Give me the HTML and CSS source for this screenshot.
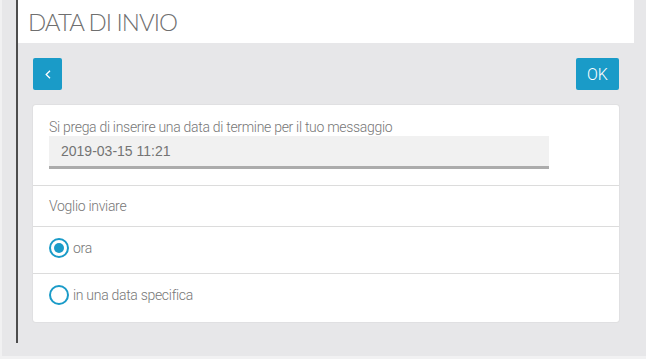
FILE: index.html
```html
<!DOCTYPE html>
<html lang="it">

<head>
    <meta charset="UTF-8">
    <meta name="viewport" content="width=device-width, initial-scale=1.0">
    <title>Data di invio</title>
    <link rel="stylesheet" href="styles.css">
</head>

<body>
    <div class="page">
        <div class="frame">
            <header class="header">
                <h1 class="title">DATA DI INVIO</h1>
            </header>
            <main class="content">
                <div class="toolbar">
                    <button class="btn btn-back" aria-label="Indietro">
                        <svg width="6" height="9" viewBox="0 0 6 9">
                            <polyline points="5,0.8 1.2,4.5 5,8.2" fill="none" stroke="#fff" stroke-width="1.3" />
                        </svg>
                    </button>
                    <button class="btn btn-ok">OK</button>
                </div>
                <div class="card">
                    <div class="section">
                        <label class="label" for="end-date">Si prega di inserire una data di termine per il tuo messaggio</label>
                        <input class="date-input" id="end-date" type="text" value="2019-03-15 11:21">
                    </div>
                    <div class="row row-title">Voglio inviare</div>
                    <div class="row row-option">
                        <span class="radio checked"></span>
                        <span class="option-text">ora</span>
                    </div>
                    <div class="row row-option last">
                        <span class="radio"></span>
                        <span class="option-text">in una data specifica</span>
                    </div>
                </div>
            </main>
        </div>
    </div>
</body>

</html>
```

FILE: styles.css
```css
* {
    margin: 0;
    padding: 0;
    box-sizing: border-box;
}

body {
    background-color: #f1f1f2;
    font-family: Roboto, "Liberation Sans", sans-serif;
    font-weight: 300;
    color: #777;
}

.page {
    margin-left: 2px;
    height: 356px;
    padding-left: 14px;
    background-color: #e7e7e9;
}

.frame {
    width: 618px;
    height: 343px;
    border-left: 2px solid #4d4d4d;
}

.header {
    height: 43px;
    background-color: #ffffff;
    padding-left: 10px;
    padding-top: 8px;
}

.title {
    font-family: Lato, sans-serif;
    font-weight: 300;
    font-size: 24px;
    line-height: 28px;
    color: #6f6f6f;
    letter-spacing: -1px;
}

.content {
    padding: 15px;
}

.toolbar {
    display: flex;
    justify-content: space-between;
    margin-bottom: 15px;
}

.btn {
    height: 32px;
    border: none;
    border-radius: 2px;
    background-color: #1a9bc8;
    color: #ffffff;
    font-family: Roboto, "Liberation Sans", sans-serif;
    font-weight: 300;
    font-size: 16px;
    cursor: pointer;
}

.btn-back {
    width: 29px;
    display: flex;
    align-items: center;
    justify-content: center;
}

.btn-ok {
    width: 43px;
}

.card {
    background-color: #ffffff;
    border-radius: 3px;
    box-shadow: 0 0 0 1px #e0e0e2;
    height: 217px;
}

.section {
    padding: 14px 16px 16px;
    border-bottom: 1px solid #dcdcdc;
}

.label {
    display: block;
    font-size: 14px;
    line-height: 17px;
    letter-spacing: -0.3px;
    color: #777;
}

.date-input {
    display: block;
    width: 500px;
    height: 33px;
    border: none;
    border-bottom: 3px solid #acacac;
    background-color: #f1f1f1;
    padding: 0 12px;
    font-family: "Liberation Sans", Arial, sans-serif;
    font-size: 14px;
    color: #747474;
    outline: none;
}

.row {
    padding: 0 16px;
    font-size: 14px;
    letter-spacing: -0.3px;
    border-bottom: 1px solid #dcdcdc;
}

.row-title {
    height: 41px;
    display: flex;
    align-items: center;
    padding-bottom: 1px;
}

.row-option {
    height: 47px;
    display: flex;
    align-items: flex-start;
    padding-top: 11px;
}

.row-option.last {
    border-bottom: none;
    height: 48px;
}

.radio {
    width: 20px;
    height: 20px;
    border: 2px solid #1a9bc8;
    border-radius: 50%;
    display: flex;
    align-items: center;
    justify-content: center;
    margin-right: 4px;
}

.radio.checked::after {
    content: "";
    width: 10px;
    height: 10px;
    border-radius: 50%;
    background-color: #1a9bc8;
}

.option-text {
    line-height: 17px;
    margin-top: 2px;
}
```
